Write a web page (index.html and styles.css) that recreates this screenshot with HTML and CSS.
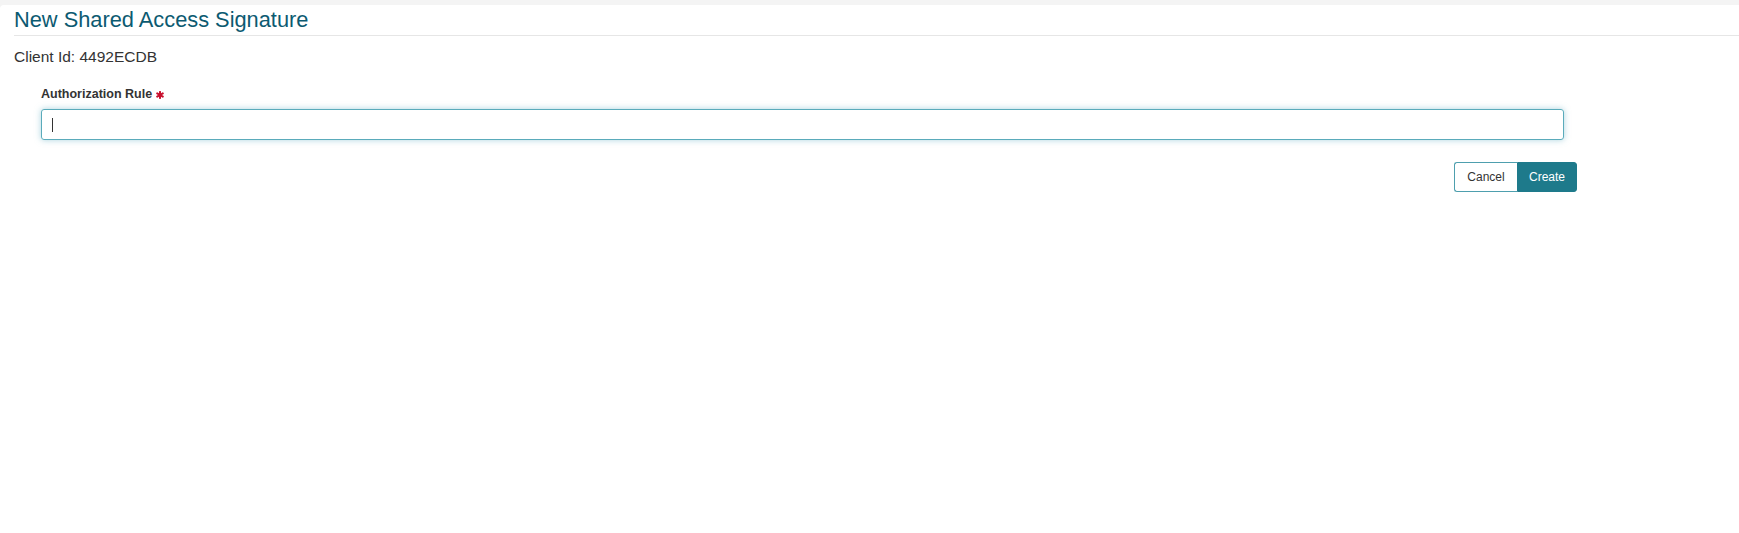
FILE: index.html
```html
<!DOCTYPE html>
<html>
<head>
<meta charset="utf-8">
<link rel="stylesheet" href="styles.css">
</head>
<body>
<div class="panel">
  <h1 class="title">New Shared Access Signature</h1>
  <div class="client">Client Id: 4492ECDB</div>
  <form class="form">
    <label class="label">Authorization Rule
      <svg class="req" width="8" height="8" viewBox="0 0 8 8"><g stroke="#c8102e" stroke-width="2" stroke-linecap="round"><line x1="4" y1="0.9" x2="4" y2="7.1"/><line x1="1.2" y1="2.4" x2="6.8" y2="5.6"/><line x1="1.2" y1="5.6" x2="6.8" y2="2.4"/></g></svg>
    </label>
    <div class="input"><span class="caret"></span></div>
    <div class="actions">
      <button type="button" class="btn cancel">Cancel</button>
      <button type="button" class="btn create">Create</button>
    </div>
  </form>
</div>
</body>
</html>
```
FILE: styles.css
```css
html, body {
  margin: 0;
  padding: 0;
  background: #f4f4f4;
  font-family: "Liberation Sans", Arial, sans-serif;
}
.panel {
  margin-top: 5px;
  background: #fff;
  border-top-left-radius: 4px;
  min-height: 528px;
  padding-top: 2px;
  box-sizing: border-box;
}
.title {
  margin: 0 0 0 14px;
  font-size: 21.8px;
  line-height: 26px;
  font-weight: normal;
  color: #0c5a71;
  padding-bottom: 2px;
  border-bottom: 1px solid #e6e6e6;
}
.client {
  margin: 11px 0 0 14px;
  font-size: 15.5px;
  line-height: 20px;
  color: #333;
}
.form {
  margin: 19px 162px 0 41px;
  display: flex;
  flex-direction: column;
}
.label {
  display: flex;
  align-items: center;
  gap: 4px;
  font-size: 12.5px;
  line-height: 16px;
  font-weight: bold;
  color: #333;
}
.req {
  margin-top: 2px;
}
.input {
  margin-top: 7px;
  margin-right: 13px;
  height: 31px;
  box-sizing: border-box;
  border: 1px solid #5aabbb;
  border-radius: 3px;
  box-shadow: 0 0 6px rgba(100, 175, 195, 0.55);
  display: flex;
  align-items: center;
  padding-left: 10px;
}
.caret {
  width: 1px;
  height: 14px;
  background: #333;
}
.actions {
  margin-top: 22px;
  display: flex;
  justify-content: flex-end;
}
.btn {
  height: 30px;
  font-family: "Liberation Sans", Arial, sans-serif;
  font-size: 12px;
  padding: 0;
  cursor: pointer;
  box-sizing: border-box;
}
.cancel {
  width: 63px;
  background: #fff;
  color: #333;
  border: 1px solid #4e9fae;
  border-right: none;
  border-radius: 3px 0 0 3px;
}
.create {
  width: 60px;
  background: #1e7a8b;
  color: #fff;
  border: 1px solid #1e7a8b;
  border-radius: 0 3px 3px 0;
}
```
